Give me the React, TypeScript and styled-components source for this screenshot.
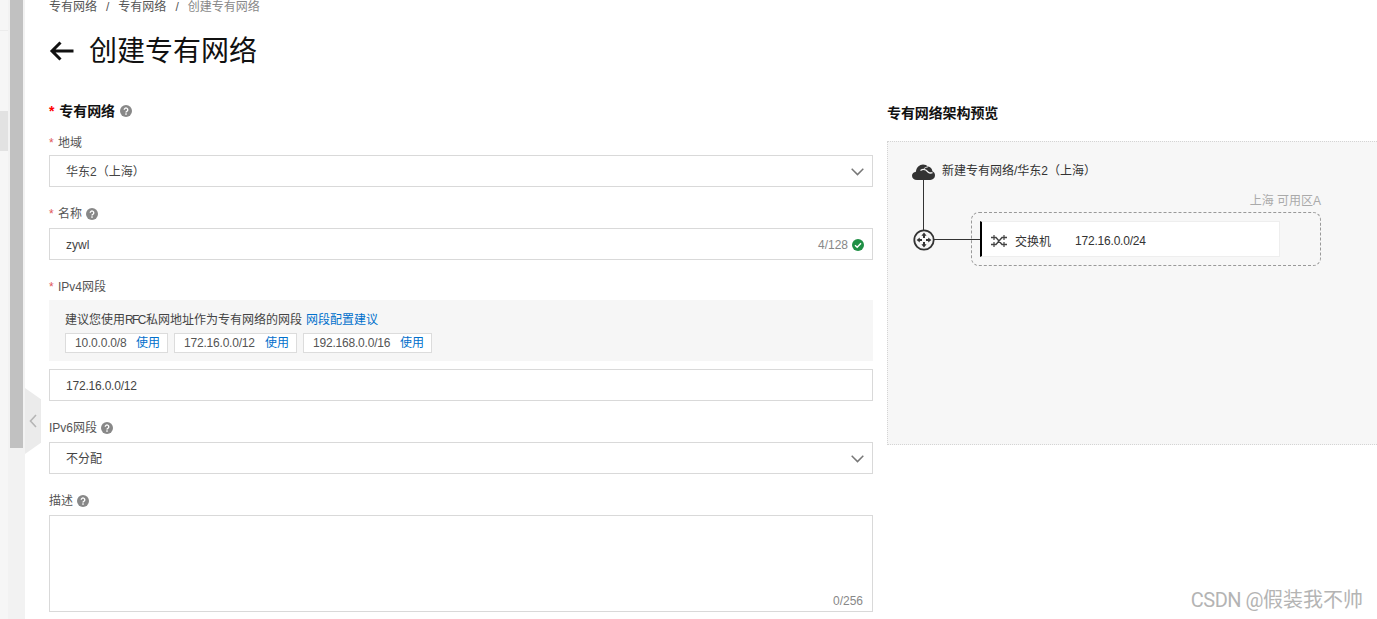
import React from "react";
import styled, { createGlobalStyle } from "styled-components";

const GlobalStyle = createGlobalStyle`
  html, body {
    margin: 0;
    padding: 0;
    background: #fff;
  }
  body {
    font-family: "Liberation Sans", "Noto Sans CJK SC", sans-serif;
    font-size: 12px;
    color: #333;
  }
`;

const Page = styled.div`
  position: relative;
  display: flex;
  width: 1377px;
  height: 619px;
  overflow: hidden;
`;

const Rail = styled.aside`
  position: relative;
  display: flex;
  flex: 0 0 25px;
  background: #f2f2f2;
`;

const RailMenu = styled.div`
  flex: 0 0 8px;
  padding-top: 30px;
  background: #f6f6f6;
`;

const RailDivider = styled.div`
  height: 1px;
  background: #ececec;
`;

const RailActive = styled.div`
  height: 40px;
  margin-top: 80px;
  background: #e2e2e2;
`;

const RailTrack = styled.div`
  flex: 0 0 17px;
  box-sizing: border-box;
  padding-left: 2px;
`;

const RailThumb = styled.div`
  width: 13px;
  height: 448px;
  background: #c1c1c1;
`;

const Handle = styled.div`
  position: absolute;
  left: 25px;
  top: 388px;
  width: 16px;
  height: 66px;
  display: flex;
  align-items: center;
  justify-content: center;
  background: #ebebeb;
  clip-path: polygon(0 0, 100% 17%, 100% 83%, 0 100%);
`;

const Main = styled.main`
  flex: 1;
  min-width: 0;
  padding: 0 0 0 24px;
`;

const Breadcrumb = styled.nav`
  display: flex;
  gap: 9px;
  height: 18px;
  margin-top: -2px;
  line-height: 18px;
  color: #555;
`;

const Crumb = styled.span<{ $current?: boolean }>`
  color: ${(p) => (p.$current ? "#888" : "#555")};
`;

const TitleRow = styled.header`
  display: flex;
  align-items: center;
  gap: 14px;
  height: 40px;
  margin-top: 15px;
`;

const Title = styled.h1`
  margin: 0;
  padding-top: 2px;
  font-size: 28px;
  font-weight: 400;
  line-height: 40px;
  color: #111;
`;

const Columns = styled.div`
  display: flex;
  gap: 14px;
  margin-top: 30px;
`;

const FormColumn = styled.section`
  flex: 0 0 824px;
`;

const SectionHead = styled.div`
  display: flex;
  align-items: center;
  gap: 5px;
  height: 20px;
  font-size: 14px;
  font-weight: 700;
  line-height: 20px;
  color: #111;
  letter-spacing: -0.1px;
`;

const Star = styled.i<{ $strong?: boolean }>`
  margin-right: ${(p) => (p.$strong ? "5px" : "1px")};
  font-style: normal;
  font-size: ${(p) => (p.$strong ? "14px" : "12px")};
  color: ${(p) => (p.$strong ? "#f00" : "#e0565a")};
`;

const Label = styled.div<{ $top: number; $bottom?: number }>`
  display: flex;
  align-items: center;
  gap: 4px;
  height: 18px;
  margin-top: ${(p) => p.$top}px;
  margin-bottom: ${(p) => p.$bottom ?? 5}px;
  line-height: 18px;
  color: #555;
`;

const Field = styled.div<{ $height?: number }>`
  position: relative;
  box-sizing: border-box;
  display: flex;
  align-items: center;
  justify-content: space-between;
  height: ${(p) => p.$height ?? 32}px;
  padding: 1px 8px 0 16px;
  border: 1px solid #d9d9d9;
  background: #fff;
  color: #444;
  line-height: 18px;
`;

const Counter = styled.span`
  display: flex;
  align-items: center;
  gap: 4px;
  color: #888;
`;

const CornerCount = styled.span`
  position: absolute;
  right: 9px;
  bottom: 1px;
  color: #888;
`;

const Hint = styled.div`
  box-sizing: border-box;
  height: 61px;
  margin-bottom: 8px;
  padding: 11px 16px 0;
  background: #f6f6f6;
  color: #444;
  line-height: 18px;
`;

const HintLink = styled.a`
  margin-left: 4px;
  color: #0070cc;
`;

const Acronym = styled.span`
  letter-spacing: -1.6px;
  margin-right: 1px;
`;

const Cidrs = styled.div`
  display: flex;
  gap: 6px;
  margin-top: 4px;
`;

const Cidr = styled.span<{ $width: number }>`
  box-sizing: border-box;
  display: flex;
  justify-content: space-between;
  width: ${(p) => p.$width}px;
  height: 20px;
  padding: 0 7px 0 9px;
  border: 1px solid #dcdcdc;
  background: #fff;
  line-height: 18px;
  color: #555;
`;

const Address = styled.span`
  letter-spacing: -0.2px;
`;

const UseLink = styled.span`
  color: #0070cc;
`;

const PreviewColumn = styled.section`
  flex: 1;
  min-width: 0;
  padding-top: 2px;
`;

const PreviewTitle = styled.h2`
  margin: 0 0 18px;
  height: 20px;
  font-size: 14px;
  font-weight: 700;
  line-height: 20px;
  color: #111;
  letter-spacing: -0.1px;
`;

const Canvas = styled.div`
  position: relative;
  box-sizing: border-box;
  height: 304px;
  border: 1px dotted #d4d4d4;
  border-right: 0;
  background: #f7f7f7;
`;

const VpcIcon = styled.span`
  position: absolute;
  left: 24px;
  top: 22px;
  line-height: 0;
`;

const VpcName = styled.span`
  position: absolute;
  left: 54px;
  top: 20px;
  line-height: 18px;
  color: #333;
`;

const VLine = styled.span`
  position: absolute;
  left: 35px;
  top: 38px;
  width: 1px;
  height: 50px;
  background: #333;
`;

const HLine = styled.span`
  position: absolute;
  left: 46px;
  top: 97px;
  width: 47px;
  height: 1px;
  background: #333;
`;

const RouterIcon = styled.span`
  position: absolute;
  left: 25px;
  top: 87px;
  line-height: 0;
`;

const ZoneName = styled.span`
  position: absolute;
  right: 56px;
  top: 50px;
  line-height: 18px;
  color: #aaa;
`;

const Zone = styled.div`
  position: absolute;
  left: 83px;
  top: 70px;
  box-sizing: border-box;
  width: 350px;
  height: 54px;
  border: 1px dashed #999;
  border-radius: 8px;
`;

const SwitchRow = styled.div`
  box-sizing: border-box;
  display: flex;
  align-items: center;
  width: 300px;
  height: 36px;
  margin: 8px 0 0 8px;
  padding: 3px 0 0 9px;
  border: 1px solid #eee;
  border-left: 2px solid #000;
  background: #fff;
  color: #333;
`;

const SwitchName = styled.span`
  margin-left: 8px;
  width: 60px;
`;

const Watermark = styled.div`
  position: absolute;
  right: 14px;
  top: 586px;
  font-family: Roboto, "Noto Sans CJK SC", sans-serif;
  font-size: 20px;
  line-height: 28px;
  color: #b4b4b4;
`;

const WatermarkSite = styled.span`
  letter-spacing: -0.5px;
`;

function Help() {
  return (
    <svg width="12" height="12" viewBox="0 0 13 13" aria-hidden="true">
      <circle cx="6.5" cy="6.5" r="6.5" fill="#888" />
      <path d="M4.600 5.200a1.900 1.900 0 1 1 2.900 1.600c-.7.400-1 .7-1 1.400" fill="none" stroke="#fff" strokeWidth="1.500" />
      <rect x="5.700" y="9" width="1.600" height="1.600" fill="#fff" />
    </svg>
  );
}

function Chevron() {
  return (
    <svg width="13" height="8" viewBox="0 0 13 8" aria-hidden="true">
      <path d="M.7.8l5.800 5.800L12.300.8" fill="none" stroke="#777" strokeWidth="1.500" />
    </svg>
  );
}

function Check() {
  return (
    <svg width="12" height="12" viewBox="0 0 12 12" aria-hidden="true">
      <circle cx="6" cy="6" r="6" fill="#1f8f45" />
      <path d="M3 6.200l2.200 2L9 4.200" fill="none" stroke="#fff" strokeWidth="1.400" />
    </svg>
  );
}

function Cloud() {
  return (
    <svg width="23" height="17" viewBox="0 0 23 17" aria-hidden="true">
      <path
        d="M5 16C2 16 0 14.200 0 11.800 0 9.500 1.700 8 3.900 7.700 4.300 3.500 7.500 0.500 11 0.500c2 0 3.700.8 5 2.100 2.400.3 4.200 2.300 4.400 4.700 1.600.7 2.600 2.200 2.600 4 0 2.700-2 4.700-4.700 4.700H5z"
        fill="#333"
      />
      <path d="M8.500 6.500c3-2.200 5.500-.9 7.500 1.500 1.500 1.300 3 1.200 4.500.7" fill="none" stroke="#f7f7f7" strokeWidth="1.300" />
      <path d="M12 4.600c1-1 2.500-1.600 4-1.800" fill="none" stroke="#f7f7f7" strokeWidth="0.900" />
    </svg>
  );
}

function Router() {
  return (
    <svg width="22" height="22" viewBox="0 0 22 22" aria-hidden="true">
      <circle cx="11" cy="11" r="9.700" fill="#f7f7f7" stroke="#333" strokeWidth="1.800" />
      <path
        d="M11 3.600l2.600 3.200H12V9h-2V6.800H8.400zM11 18.400l2.600-3.200H12V13h-2v2.200H8.400zM3.600 11l3.200-2.600V10H9v2H6.800v1.600zM18.400 11l-3.200-2.600V10H13v2h2.200v1.600z"
        fill="#333"
      />
    </svg>
  );
}

function Shuffle() {
  return (
    <svg width="16" height="12" viewBox="0 0 16 12" aria-hidden="true">
      <path d="M0 2.500h5l6 7h5M0 9.500h5l6-7h5" fill="none" stroke="#444" strokeWidth="1.400" />
      <path d="M3 0v5M13 0v5M3 7v5M13 7v5" fill="none" stroke="#444" strokeWidth="1.200" />
    </svg>
  );
}

export default function App() {
  return (
    <Page>
      <GlobalStyle />
      <Rail>
        <RailMenu>
          <RailDivider />
          <RailActive />
        </RailMenu>
        <RailTrack>
          <RailThumb />
        </RailTrack>
        <Handle>
          <svg width="8" height="14" viewBox="0 0 8 14" aria-hidden="true">
            <path d="M7 1L1.500 7 7 13" fill="none" stroke="#b5b5b5" strokeWidth="1.600" />
          </svg>
        </Handle>
      </Rail>
      <Main>
        <Breadcrumb>
          <Crumb>专有网络</Crumb>
          <Crumb>/</Crumb>
          <Crumb>专有网络</Crumb>
          <Crumb>/</Crumb>
          <Crumb $current>创建专有网络</Crumb>
        </Breadcrumb>
        <TitleRow>
          <svg width="26" height="22" viewBox="0 0 26 22" aria-hidden="true">
            <path d="M24.500 11H3M11.500 2.500L3 11l8.500 8.500" fill="none" stroke="#111" strokeWidth="3" />
          </svg>
          <Title>创建专有网络</Title>
        </TitleRow>
        <Columns>
          <FormColumn>
            <SectionHead>
              <span>
                <Star $strong>*</Star>专有网络
              </span>
              <Help />
            </SectionHead>
            <Label $top={13} $bottom={3}>
              <span>
                <Star>*</Star> 地域
              </span>
            </Label>
            <Field>
              华东2（上海）
              <Chevron />
            </Field>
            <Label $top={18}>
              <span>
                <Star>*</Star> 名称
              </span>
              <Help />
            </Label>
            <Field>
              zywl
              <Counter>
                4/128
                <Check />
              </Counter>
            </Field>
            <Label $top={18} $bottom={4}>
              <span>
                <Star>*</Star> IPv4网段
              </span>
            </Label>
            <Hint>
              建议您使用<Acronym>RFC</Acronym>私网地址作为专有网络的网段
              <HintLink>网段配置建议</HintLink>
              <Cidrs>
                <Cidr $width={103}>
                  <Address>10.0.0.0/8</Address> <UseLink>使用</UseLink>
                </Cidr>
                <Cidr $width={123}>
                  <Address>172.16.0.0/12</Address> <UseLink>使用</UseLink>
                </Cidr>
                <Cidr $width={129}>
                  <Address>192.168.0.0/16</Address> <UseLink>使用</UseLink>
                </Cidr>
              </Cidrs>
            </Hint>
            <Field>
              <Address>172.16.0.0/12</Address>
            </Field>
            <Label $top={18}>
              <span>IPv6网段</span>
              <Help />
            </Label>
            <Field>
              不分配
              <Chevron />
            </Field>
            <Label $top={18}>
              <span>描述</span>
              <Help />
            </Label>
            <Field $height={97}>
              <CornerCount>0/256</CornerCount>
            </Field>
          </FormColumn>
          <PreviewColumn>
            <PreviewTitle>专有网络架构预览</PreviewTitle>
            <Canvas>
              <VLine />
              <HLine />
              <VpcIcon>
                <Cloud />
              </VpcIcon>
              <VpcName>新建专有网络/华东2（上海）</VpcName>
              <RouterIcon>
                <Router />
              </RouterIcon>
              <ZoneName>上海 可用区A</ZoneName>
              <Zone>
                <SwitchRow>
                  <Shuffle />
                  <SwitchName>交换机</SwitchName>
                  <Address>172.16.0.0/24</Address>
                </SwitchRow>
              </Zone>
            </Canvas>
          </PreviewColumn>
        </Columns>
      </Main>
      <Watermark>
        <WatermarkSite>CSDN @</WatermarkSite>假装我不帅
      </Watermark>
    </Page>
  );
}
